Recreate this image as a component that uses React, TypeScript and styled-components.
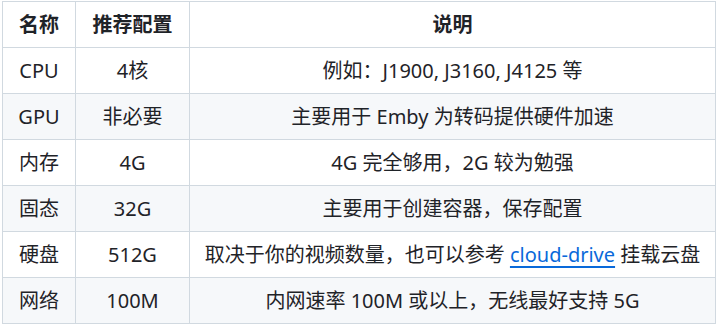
import styled, { createGlobalStyle } from "styled-components";

const Global = createGlobalStyle`
    body {
        margin: 0;
        padding: 1px 0 0 2px;
        background: #ffffff;
        font-family: "Noto Sans", "Noto Sans CJK SC", sans-serif;
        color: #1f2328;
    }
`

const Table = styled.table`
    border-collapse: collapse;
    table-layout: fixed;
    width: 714px;
    font-size: 20px;
`

const Row = styled.tr<{ $striped?: boolean }>`
    background-color: ${(p) => (p.$striped ? "#f6f8fa" : "#ffffff")};
`

const Head = styled.th<{ $w?: number }>`
    box-sizing: border-box;
    width: ${(p) => (p.$w ? `${p.$w}px` : "auto")};
    border: 1px solid #d1d9e0;
    padding: 7.5px 8px;
    line-height: 30px;
    font-weight: 700;
    text-align: center;
`

const Cell = styled.td`
    border: 1px solid #d1d9e0;
    padding: 7.5px 8px;
    line-height: 30px;
    text-align: center;
    white-space: nowrap;
`

const Link = styled.a`
    color: #0969da;
    text-decoration: underline;
    text-decoration-thickness: 2px;
    text-underline-offset: 4px;
`

const rows: [string, string, React.ReactNode][] = [
    ["CPU", "4核", "例如：J1900, J3160, J4125 等"],
    ["GPU", "非必要", "主要用于 Emby 为转码提供硬件加速"],
    ["内存", "4G", "4G 完全够用，2G 较为勉强"],
    ["固态", "32G", "主要用于创建容器，保存配置"],
    [
        "硬盘",
        "512G",
        <>
            取决于你的视频数量，也可以参考 <Link href="#">cloud-drive</Link> 挂载云盘
        </>,
    ],
    ["网络", "100M", "内网速率 100M 或以上，无线最好支持 5G"],
]

export default function App() {
    return (
        <>
            <Global />
            <Table>
                <thead>
                    <Row>
                        <Head $w={73}>名称</Head>
                        <Head $w={114}>推荐配置</Head>
                        <Head>说明</Head>
                    </Row>
                </thead>
                <tbody>
                    {rows.map(([name, spec, note], i) => (
                        <Row key={name} $striped={i % 2 === 1}>
                            <Cell>{name}</Cell>
                            <Cell>{spec}</Cell>
                            <Cell>{note}</Cell>
                        </Row>
                    ))}
                </tbody>
            </Table>
        </>
    );
}
